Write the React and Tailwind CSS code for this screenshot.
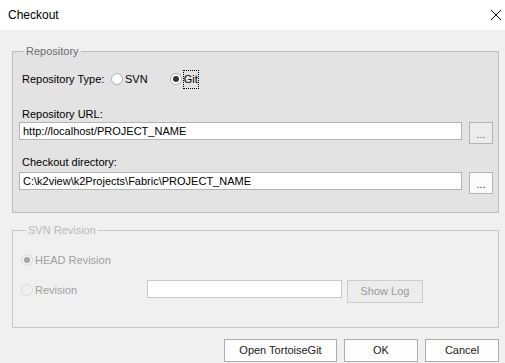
import { useState } from "react";

const font = { fontFamily: '"Liberation Sans", Arial, sans-serif' };

function Radio({ checked, disabled, label, focused, onClick }) {
  return (
    <label className="flex items-center cursor-default" onClick={onClick}>
      <span
        className={
          "w-[12px] h-[12px] rounded-full border flex items-center justify-center " +
          (disabled ? "border-[#d9d9d9] bg-[#f0f0f0]" : "border-[#b0b0b0] bg-white")
        }
      >
        {checked && (
          <span
            className={
              "w-[6px] h-[6px] rounded-full " +
              (disabled ? "bg-[#a6a6a6]" : "bg-[#333333]")
            }
          />
        )}
      </span>
      <span
        className={
          "ml-[1px] leading-[17px] " +
          (focused ? "border border-dotted border-black" : "border border-transparent") +
          (disabled ? " text-[#a0a0a0]" : " text-black")
        }
      >
        {label}
      </span>
    </label>
  );
}

export default function App() {
  const [repoType, setRepoType] = useState("git");

  return (
    <div className="w-[505px] h-[363px] bg-[#f0f0f0] flex flex-col overflow-hidden text-[11px]" style={font}>
      {/* title bar */}
      <div className="h-[30px] bg-white flex items-center justify-between pl-[8px] pr-[2px]">
        <span className="text-[12px] text-black">Checkout</span>
        <svg width="12" height="12" viewBox="0 0 12 12" className="mr-[1px]">
          <path d="M1 1 L11 11 M11 1 L1 11" stroke="#111" strokeWidth="1" fill="none" />
        </svg>
      </div>

      <div className="px-[12px] pr-[6px] flex flex-col">
        {/* Repository group */}
        <fieldset className="mt-[14px] border border-[#bcbcbc] bg-[#e3e3e3] pl-[6px] pr-[5px] pb-[18px]">
          <legend className="ml-[5px] px-[2px] text-[#6d6d6d] leading-[14px]">Repository</legend>

          <div className="mt-[11px] h-[20px] flex items-center pl-[3px]">
            <span className="text-black w-[89px]">Repository Type:</span>
            <Radio label="SVN" checked={repoType === "svn"} onClick={() => setRepoType("svn")} />
            <span className="w-[21px]" />
            <Radio label="Git" checked={repoType === "git"} focused onClick={() => setRepoType("git")} />
          </div>

          <div className="mt-[18px] pl-[3px] leading-[14px] text-black">Repository URL:</div>
          <div className="mt-[1px] flex items-start gap-[7px]">
            <div className="flex-1 h-[18px] bg-white border border-[#b4b4b4] flex items-center pl-[3px] text-black">
              http://localhost/PROJECT_NAME
            </div>
            <button className="w-[24px] h-[22px] bg-[#ececec] border border-[#b4b4b4] text-[#6a6a6a] leading-none pt-[2px]">
              ...
            </button>
          </div>

          <div className="mt-[11px] pl-[3px] leading-[14px] text-black">Checkout directory:</div>
          <div className="mt-[3px] flex items-start gap-[7px]">
            <div className="flex-1 h-[18px] bg-white border border-[#b4b4b4] flex items-center pl-[3px] text-black">
              C:\k2view\k2Projects\Fabric\PROJECT_NAME
            </div>
            <button className="w-[24px] h-[22px] bg-[#fbfbfb] border border-[#b4b4b4] text-[#333333] leading-none pt-[2px]">
              ...
            </button>
          </div>
        </fieldset>

        {/* SVN Revision group */}
        <fieldset className="mt-[10px] border border-[#c8c8c8] pl-[8px] pr-[5px] pb-[24px]">
          <legend className="ml-[5px] px-[2px] text-[#b8b8b8] leading-[14px]">SVN Revision</legend>

          <div className="mt-[13px] h-[20px] flex items-center">
            <Radio label="HEAD Revision" checked disabled />
          </div>

          <div className="mt-[10px] flex items-start">
            <div className="w-[126px] h-[20px] flex items-center">
              <Radio label="Revision" disabled />
            </div>
            <div className="w-[195px] h-[18px] bg-white border border-[#c8c8c8]" />
            <button className="ml-[5px] w-[76px] h-[23px] bg-[#ececec] border border-[#cccccc] text-[#9a9a9a]">
              Show Log
            </button>
          </div>
        </fieldset>

        {/* bottom buttons */}
        <div className="mt-[11px] flex justify-end gap-[7px]">
          <button className="w-[113px] h-[23px] bg-[#fdfdfd] border border-[#adadad] text-[#222]">
            Open TortoiseGit
          </button>
          <button className="w-[74px] h-[23px] bg-[#fdfdfd] border border-[#adadad] text-[#222]">OK</button>
          <button className="w-[74px] h-[23px] bg-[#fdfdfd] border border-[#adadad] text-[#222]">Cancel</button>
        </div>
      </div>
    </div>
  );
}
